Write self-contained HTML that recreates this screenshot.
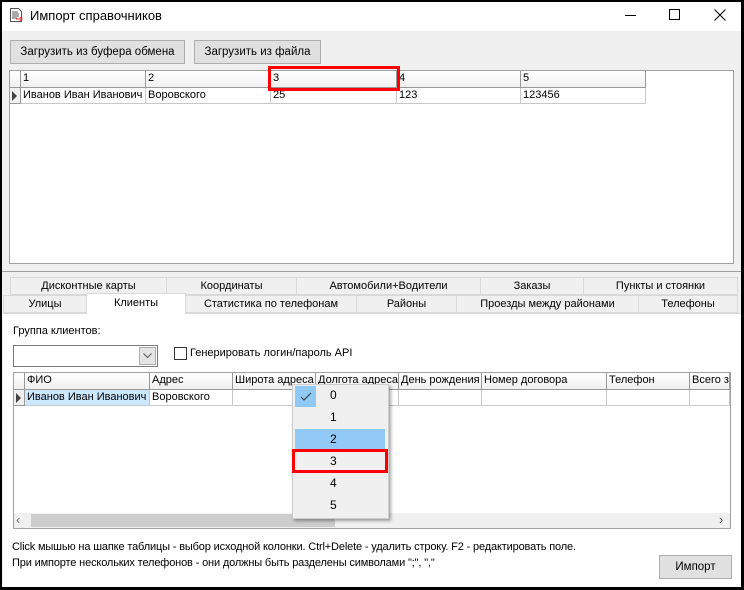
<!DOCTYPE html>
<html><head><meta charset="utf-8"><style>
*{box-sizing:border-box;margin:0;padding:0}
body{width:744px;height:590px;background:#000;font-family:"Liberation Sans",sans-serif;font-size:11.5px;color:#000;position:relative;overflow:hidden}
.a{position:absolute}
.win{left:2px;top:2px;width:739px;height:585px;background:#f0f0f0}
.btn{background:#e1e1e1;border:1px solid #adadad;text-align:center;line-height:22px}
.cell{position:absolute;border-right:1px solid #c8c8c8;border-bottom:1px solid #c8c8c8;padding-left:2px;line-height:15px;white-space:nowrap;overflow:hidden;font-size:11px}
.hd{background:linear-gradient(#fff,#f0f0f0);border-right:1px solid #999;border-bottom:1px solid #999}
.tab{position:absolute;height:18px;border:1px solid #d9d9d9;background:#f0f0f0;text-align:center;line-height:16px;font-size:11px}
.mi{position:absolute;left:330px;font-size:12px}
</style></head><body>
<div class="a win"></div>
<div class="a" style="left:2px;top:2px;width:739px;height:29px;background:#fff"></div>
<svg class="a" style="left:9px;top:7px" width="14" height="16"><path d="M1.5 1.5h8l3 3v10h-11z" fill="#fff" stroke="#555"/><path d="M3 5h6M3 7h7M3 9h7M3 11h5" stroke="#555"/><path d="M7 12h6l-2-2M13 12l-2 2" stroke="#e33" fill="none"/></svg>
<div class="a" style="left:30px;top:8px;font-size:13px">Импорт справочников</div>
<div class="a" style="left:625px;top:15px;width:11px;height:1px;background:#000"></div>
<div class="a" style="left:669px;top:9px;width:11px;height:11px;border:1px solid #000"></div>
<svg class="a" style="left:714px;top:9px" width="12" height="12"><path d="M.5 .5l11 11M11.5 .5l-11 11" stroke="#000"/></svg>
<div class="a btn" style="left:10px;top:40px;width:175px;height:24px">Загрузить из буфера обмена</div>
<div class="a btn" style="left:194px;top:40px;width:127px;height:24px">Загрузить из файла</div>
<div class="a" style="left:9px;top:70px;width:725px;height:194px;background:#fff;border:1px solid #a0a0a0"></div>
<div class="cell hd" style="left:10px;top:71px;width:11px;height:17px"></div>
<div class="cell hd" style="left:21px;top:71px;width:125px;height:17px">1</div>
<div class="cell hd" style="left:146px;top:71px;width:125px;height:17px">2</div>
<div class="cell hd" style="left:271px;top:71px;width:126px;height:17px">3</div>
<div class="cell hd" style="left:397px;top:71px;width:124px;height:17px">4</div>
<div class="cell hd" style="left:521px;top:71px;width:125px;height:17px">5</div>
<div class="cell" style="left:10px;top:88px;width:11px;height:16px;background:#f0f0f0;border-color:#999"><svg width="6" height="10" style="margin-top:3px"><path d="M0 0l5 5-5 5z" fill="#444"/></svg></div>
<div class="cell" style="left:21px;top:88px;width:125px;height:16px">Иванов Иван Иванович</div>
<div class="cell" style="left:146px;top:88px;width:125px;height:16px">Воровского</div>
<div class="cell" style="left:271px;top:88px;width:126px;height:16px">25</div>
<div class="cell" style="left:397px;top:88px;width:124px;height:16px">123</div>
<div class="cell" style="left:521px;top:88px;width:125px;height:16px">123456</div>
<div class="a" style="left:268px;top:66px;width:132px;height:25px;border:3px solid #f00"></div>
<div class="a" style="left:2px;top:271px;width:739px;height:1px;background:#a0a0a0"></div>
<div class="tab" style="left:10px;top:277px;width:157px">Дисконтные карты</div>
<div class="tab" style="left:166px;top:277px;width:131px">Координаты</div>
<div class="tab" style="left:296px;top:277px;width:185px">Автомобили+Водители</div>
<div class="tab" style="left:480px;top:277px;width:104px">Заказы</div>
<div class="tab" style="left:583px;top:277px;width:155px">Пункты и стоянки</div>
<div class="a" style="left:3px;top:313px;width:738px;height:274px;background:#fff;border-top:1px solid #d9d9d9"></div>
<div class="tab" style="left:3px;top:295px;width:84px">Улицы</div>
<div class="tab" style="left:86px;top:293px;width:100px;height:21px;background:#fff;border-bottom:none;line-height:18px">Клиенты</div>
<div class="tab" style="left:185px;top:295px;width:172px">Статистика по телефонам</div>
<div class="tab" style="left:356px;top:295px;width:101px">Районы</div>
<div class="tab" style="left:456px;top:295px;width:183px">Проезды между районами</div>
<div class="tab" style="left:638px;top:295px;width:100px">Телефоны</div>
<div class="a" style="left:13px;top:325px;font-size:11px">Группа клиентов:</div>
<div class="a" style="left:13px;top:345px;width:145px;height:22px;border:1px solid #7a7a7a;background:#fff"></div>
<div class="a" style="left:139px;top:347px;width:17px;height:18px;border:1px solid #adadad;background:#e5e5e5"></div>
<svg class="a" style="left:143px;top:353px" width="10" height="6"><path d="M.5 .5l4 4 4-4" stroke="#555" fill="none"/></svg>
<div class="a" style="left:174px;top:347px;width:13px;height:13px;border:1px solid #333;background:#fff"></div>
<div class="a" style="left:190px;top:347px;font-size:11px">Генерировать логин/пароль API</div>
<div class="a" style="left:13px;top:372px;width:718px;height:157px;border:1px solid #a0a0a0;background:#fff"></div>
<div class="cell hd" style="left:14px;top:373px;width:11px;height:17px"></div>
<div class="cell hd" style="left:25px;top:373px;width:125px;height:17px">ФИО</div>
<div class="cell hd" style="left:150px;top:373px;width:83px;height:17px">Адрес</div>
<div class="cell hd" style="left:233px;top:373px;width:83px;height:17px">Широта адреса</div>
<div class="cell hd" style="left:316px;top:373px;width:83px;height:17px">Долгота адреса</div>
<div class="cell hd" style="left:399px;top:373px;width:83px;height:17px">День рождения</div>
<div class="cell hd" style="left:482px;top:373px;width:125px;height:17px">Номер договора</div>
<div class="cell hd" style="left:607px;top:373px;width:83px;height:17px">Телефон</div>
<div class="cell hd" style="left:690px;top:373px;width:40px;height:17px">Всего за</div>
<div class="cell" style="left:14px;top:390px;width:11px;height:16px;background:#f0f0f0;border-color:#999"><svg width="6" height="10" style="margin-top:3px"><path d="M0 0l5 5-5 5z" fill="#444"/></svg></div>
<div class="cell" style="left:25px;top:390px;width:125px;height:16px;background:#cce8ff">Иванов Иван Иванович</div>
<div class="cell" style="left:150px;top:390px;width:83px;height:16px">Воровского</div>
<div class="cell" style="left:233px;top:390px;width:83px;height:16px"></div>
<div class="cell" style="left:316px;top:390px;width:83px;height:16px"></div>
<div class="cell" style="left:399px;top:390px;width:83px;height:16px"></div>
<div class="cell" style="left:482px;top:390px;width:125px;height:16px"></div>
<div class="cell" style="left:607px;top:390px;width:83px;height:16px"></div>
<div class="cell" style="left:690px;top:390px;width:40px;height:16px"></div>
<div class="a" style="left:14px;top:513px;width:716px;height:15px;background:#f0f0f0"></div>
<div class="a" style="left:31px;top:514px;width:304px;height:13px;background:#cdcdcd"></div>
<div class="a" style="left:16px;top:512px;color:#777;font-size:13px">‹</div>
<div class="a" style="left:719px;top:512px;color:#555;font-size:13px">›</div>
<div class="a" style="left:292px;top:384px;width:97px;height:135px;background:#f0f0f0;border:1px solid #ccc;box-shadow:2px 2px 3px rgba(0,0,0,.35)"></div>
<div class="a" style="left:295px;top:386px;width:21px;height:21px;background:#90c8f6"></div>
<svg class="a" style="left:300px;top:392px" width="12" height="10"><path d="M1 5l3 3 7-7" stroke="#333" fill="none"/></svg>
<div class="a" style="left:295px;top:429px;width:90px;height:20px;background:#91c9f7"></div>
<div class="a" style="left:292px;top:449px;width:96px;height:24px;border:3px solid #f00"></div>
<div class="mi" style="top:388px">0</div>
<div class="mi" style="top:410px">1</div>
<div class="mi" style="top:432px">2</div>
<div class="mi" style="top:454px">3</div>
<div class="mi" style="top:476px">4</div>
<div class="mi" style="top:498px">5</div>
<div class="a" style="left:12px;top:541px;font-size:11px;letter-spacing:-0.15px">Click мышью на шапке таблицы - выбор исходной колонки. Ctrl+Delete - удалить строку. F2 - редактировать поле.</div>
<div class="a" style="left:12px;top:557px;font-size:11px;letter-spacing:-0.15px">При импорте нескольких телефонов - они должны быть разделены символами ";", ","</div>
<div class="a btn" style="left:659px;top:555px;width:73px;height:24px">Импорт</div>
</body></html>
